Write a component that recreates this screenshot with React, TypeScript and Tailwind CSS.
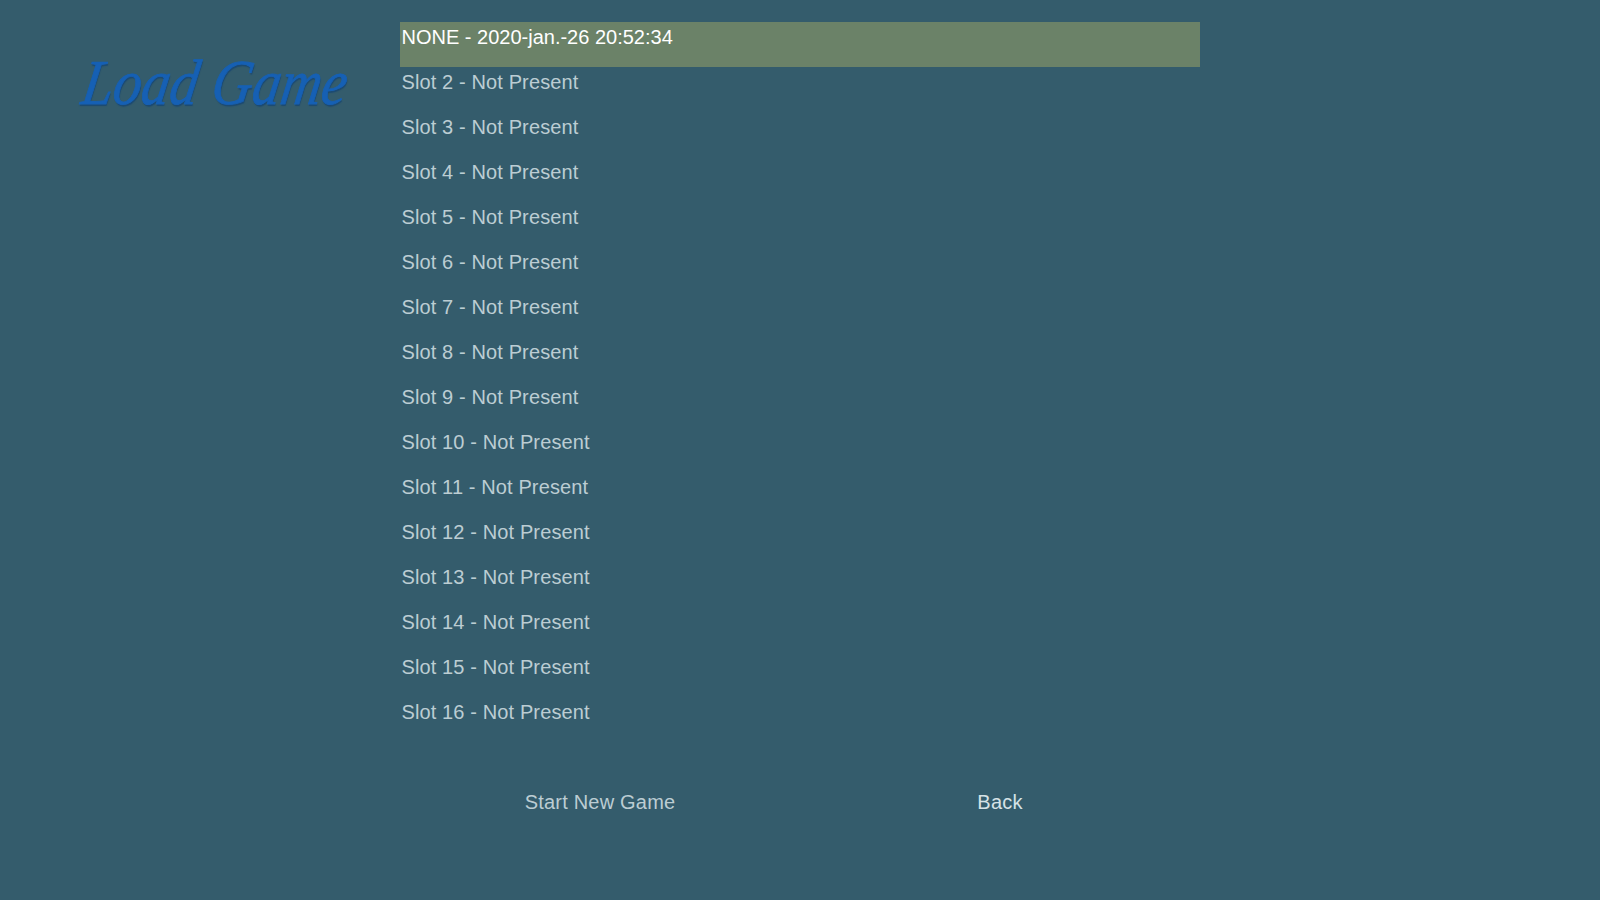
const slots = Array.from({ length: 15 }, (_, i) => `Slot ${i + 2} - Not Present`);

export default function App() {
  return (
    <div className="flex h-[900px] w-[1600px] overflow-hidden bg-[#345c6c] font-['Liberation_Sans',sans-serif] text-[20px] leading-[30px] text-[#bccdd3]">
      {/* Title */}
      <div className="w-[400px] shrink-0 pl-[83px] pt-[47px]">
        <h1 className="origin-left skew-x-[-10deg] scale-x-[0.88] whitespace-nowrap font-['Liberation_Serif',serif] text-[64px] italic leading-[72px] text-[#1660b4] [-webkit-text-stroke:0.8px_#1660b4] [text-shadow:1px_2px_1px_#1c4a72]">
          Load Game
        </h1>
      </div>

      <div className="w-[800px] shrink-0 pt-[22px]">
        {/* Slot list */}
        <div className="flex h-[45px] items-start bg-[#6b8268] px-[1.5px] text-white">
          NONE - 2020-jan.-26 20:52:34
        </div>
        {slots.map((slot) => (
          <div key={slot} className="h-[45px] px-[1.5px] tracking-[0.12px]">
            {slot}
          </div>
        ))}

        {/* Actions */}
        <div className="mt-[45px] grid grid-cols-2 text-center tracking-[0.2px]">
          <div>Start New Game</div>
          <div className="text-[#d6e2e6]">Back</div>
        </div>
      </div>
    </div>
  );
}
